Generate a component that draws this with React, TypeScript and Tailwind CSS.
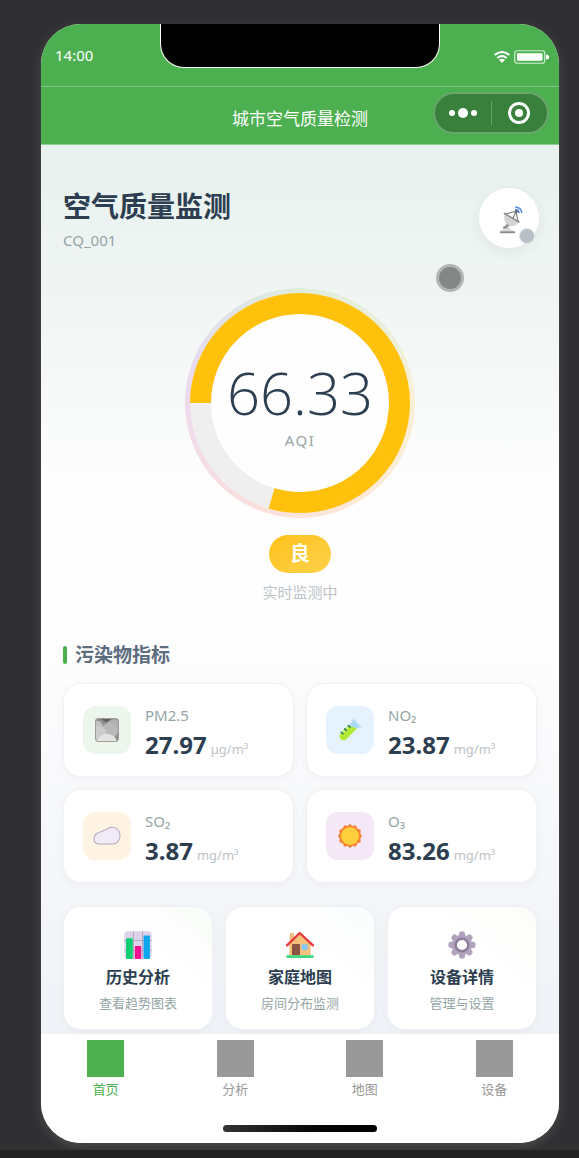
import React, { useState } from "react";
import clsx from "clsx";

interface Pollutant {
  id: string;
  name: string;
  value: string;
  unit: string;
  iconBg: string;
  icon: React.ReactNode;
}

interface Action {
  id: string;
  title: string;
  description: string;
  tint: string;
  icon: React.ReactNode;
}

const DishIcon = () => (
  <svg viewBox="0 0 68 80" className="w-6 h-7" aria-hidden="true">
    <path d="M3 73 L15 61 Q22 57 29 63 L43 73 Z" fill="#dcdcdc" />
    <rect x="2" y="72" width="44" height="6" rx="2" fill="#8e8e8e" />
    <path d="M14 62 L23 48 L31 55 L22 64 Z" fill="#9a9a9a" />
    <circle cx="15" cy="61" r="3.5" fill="#7d7d7d" />
    <path d="M15 21 L15 39 Q19 53 35 58 Q49 58 57 46 Z" fill="#d4d4d4" />
    <path d="M15 21 L57 46" stroke="#858585" strokeWidth="4" strokeLinecap="round" />
    <path d="M19 23 L48 15 L54 43 M40 35 L48 15" fill="none" stroke="#858585" strokeWidth="3.5" />
    <circle cx="49" cy="16" r="4.5" fill="#6f6f6f" />
    <path d="M46 10 Q55 10 57 20" fill="none" stroke="#4677d8" strokeWidth="4.5" />
    <path d="M46 3 Q63 4 65 20" fill="none" stroke="#5d8ae6" strokeWidth="4.5" />
  </svg>
);

const FogIcon = () => (
  <svg viewBox="0 0 72 72" className="w-6 h-6" aria-hidden="true">
    <defs>
      <clipPath id="fog-clip">
        <rect x="1" y="1" width="70" height="70" rx="9" />
      </clipPath>
    </defs>
    <g clipPath="url(#fog-clip)">
      <rect width="72" height="72" fill="#8f8f8f" />
      <path d="M12 0 H54 L34 13 Z" fill="#606060" />
      <circle cx="58" cy="26" r="22" fill="#b0b0b0" />
      <circle cx="6" cy="26" r="18" fill="#c0c0c0" />
      <circle cx="44" cy="38" r="24" fill="#b9b9b9" />
      <circle cx="10" cy="50" r="26" fill="#cbcbcb" />
      <path d="M6 72 Q12 48 36 47 Q60 48 66 72 Z" fill="#e3e3e3" />
    </g>
    <rect x="1.5" y="1.5" width="69" height="69" rx="9" fill="none" stroke="#a19c9a" strokeWidth="3" />
  </svg>
);

const TubeIcon = () => (
  <svg viewBox="0 0 72 72" className="w-6 h-6" aria-hidden="true">
    <path d="M42 12 L46 2 L71 27 L60 29 L52 36 L34 20 Z" fill="#a9d8fb" />
    <path d="M45 3 L70 27" stroke="#c3e4fd" strokeWidth="4" strokeLinecap="round" />
    <path d="M31 23 L52 29 L57 31 L27 62 Q17 71 8 63 Q0 54 9 44 Z" fill="#b2ea34" />
    <path d="M12 47 L33 26" stroke="#d3f77b" strokeWidth="4" />
    <path d="M10 43 L15 47 M20 33 L25 37 M31 23 L36 27" stroke="#26815c" strokeWidth="5" strokeLinecap="round" />
  </svg>
);

const CloudIcon = () => (
  <svg viewBox="0 0 80 56" className="w-7 h-5" aria-hidden="true">
    <path
      d="M17 51 C6 50 2 44 3 35 C4 24 13 18 23 16 C28 15 30 11 35 10 C41 10 42 6 48 4 C58 1 69 5 74 14 C80 25 77 40 68 47 C65 50 61 51 57 51 Z"
      fill="#f1ebf7"
      stroke="#baa9bd"
      strokeWidth="3"
    />
  </svg>
);

const SunIcon = () => (
  <svg viewBox="0 0 72 72" className="w-6 h-6" aria-hidden="true">
    <path
      d="M36 1 L43 7 L53 5 L57 14 L67 18 L66 28 L71 36 L66 44 L67 54 L57 58 L53 67 L43 65 L36 71 L29 65 L19 67 L15 58 L5 54 L6 44 L1 36 L6 28 L5 18 L15 14 L19 5 L29 7 Z"
      fill="#f58435"
      stroke="#f58435"
      strokeWidth="2"
      strokeLinejoin="round"
    />
    <circle cx="36" cy="36" r="27" fill="#fdcf3c" />
  </svg>
);

const ChartIcon = () => (
  <svg viewBox="0 0 80 80" className="w-7 h-7" aria-hidden="true">
    <rect x="1" y="1" width="78" height="78" rx="9" fill="#ddd3e8" />
    <path d="M27 1 V79 M53 1 V79 M1 27 H79 M1 55 H79" stroke="#b5a8c2" strokeWidth="3" />
    <rect x="6" y="21" width="19" height="59" rx="2" fill="#08cf70" />
    <rect x="31" y="43" width="18" height="37" rx="2" fill="#f50f8e" />
    <rect x="56" y="13" width="18" height="67" rx="2" fill="#0aa5ef" />
  </svg>
);

const HouseIcon = () => (
  <svg viewBox="0 0 84 80" className="w-7 h-7" aria-hidden="true">
    <rect x="11" y="4" width="13" height="30" fill="#f0c084" />
    <path d="M10 37 L41 8 L74 37 V72 H10 Z" fill="#f5bf7c" />
    <rect x="18" y="37" width="24" height="34" rx="2" fill="#8c5342" />
    <rect x="47" y="38" width="18" height="17" rx="2" fill="#86c9f7" />
    <path d="M3 41 L41 4 L81 41" fill="none" stroke="#e33b3b" strokeWidth="7" strokeLinecap="round" strokeLinejoin="round" />
    <rect x="1" y="71" width="82" height="8" rx="3" fill="#3fd982" />
  </svg>
);

const GearIcon = () => (
  <svg viewBox="0 0 80 80" className="w-7 h-7" aria-hidden="true">
    <g stroke="#b0a3bb" strokeWidth="18" strokeLinecap="round">
      <path d="M40 10 V70 M10 40 H70 M19 19 L61 61 M61 19 L19 61" />
    </g>
    <circle cx="40" cy="40" r="29" fill="#b0a3bb" />
    <circle cx="40" cy="40" r="18" fill="#ffffff" stroke="#8d7c9b" strokeWidth="7" />
  </svg>
);

const WifiIcon = () => (
  <svg viewBox="0 0 48 36" className="w-4 h-3" aria-hidden="true">
    <path d="M2 12 Q24 -6 46 12" fill="none" stroke="#fff" strokeWidth="6" />
    <path d="M10 21 Q24 9 38 21" fill="none" stroke="#fff" strokeWidth="6" />
    <path d="M24 35 L15 27 Q24 20 33 27 Z" fill="#fff" />
  </svg>
);

const BatteryIcon = () => (
  <svg viewBox="0 0 36 14" className="w-9 h-3.5" aria-hidden="true">
    <rect x="0.75" y="0.75" width="30" height="12.5" rx="2.5" fill="none" stroke="#d3edd4" strokeWidth="1.2" />
    <rect x="3" y="3.2" width="25.5" height="7.6" rx="1" fill="#fff" />
    <path d="M32 4.5 Q35.2 4.5 35.2 7 Q35.2 9.5 32 9.5 Z" fill="#fff" />
  </svg>
);

const pollutants: Pollutant[] = [
  { id: "pm25", name: "PM2.5", value: "27.97", unit: "μg/m³", iconBg: "bg-[#ecf6ed]", icon: <FogIcon /> },
  { id: "no2", name: "NO₂", value: "23.87", unit: "mg/m³", iconBg: "bg-[#e6f2fe]", icon: <TubeIcon /> },
  { id: "so2", name: "SO₂", value: "3.87", unit: "mg/m³", iconBg: "bg-[#fff3e3]", icon: <CloudIcon /> },
  { id: "o3", name: "O₃", value: "83.26", unit: "mg/m³", iconBg: "bg-[#f4e7f6]", icon: <SunIcon /> },
];

const actions: Action[] = [
  { id: "history", title: "历史分析", description: "查看趋势图表", tint: "to-[#f9fcf9]", icon: <ChartIcon /> },
  { id: "map", title: "家庭地图", description: "房间分布监测", tint: "to-[#fafcfd]", icon: <HouseIcon /> },
  { id: "device", title: "设备详情", description: "管理与设置", tint: "to-[#fdfcf9]", icon: <GearIcon /> },
];

const tabs = ["首页", "分析", "地图", "设备"];

const AqiGauge: React.FC<{ value: string; percent: number }> = ({ value, percent }) => {
  const radius = 99.5;
  const length = 2 * Math.PI * radius;

  return (
    <div className="grid place-items-center w-[230px] h-[230px] rounded-full bg-[conic-gradient(#deeedd,#f8f0d5_25%,#fdebd8_40%,#fbe0dc_55%,#f3dcea_70%,#e8daf0_80%,#dfe3e6_90%,#deeedd)]">
      <svg viewBox="0 0 220 220" className="col-start-1 row-start-1 w-[220px] h-[220px]" aria-hidden="true">
        <circle cx="110" cy="110" r="100" fill="#fefefe" />
        <circle cx="110" cy="110" r={radius} fill="none" stroke="#efefef" strokeWidth="21" />
        <circle
          cx="110"
          cy="110"
          r={radius}
          fill="none"
          stroke="#ffc10c"
          strokeWidth="21"
          strokeDasharray={`${(length * percent) / 100} ${length}`}
          transform="rotate(180 110 110)"
        />
      </svg>
      <div className="col-start-1 row-start-1 flex flex-col items-center">
        <p className="font-['Open_Sans','Noto_Sans',sans-serif] font-light text-[58px] leading-[74px] text-[#2c3e50]">{value}</p>
        <p className="text-[15px] leading-5 tracking-widest text-[#95a5a6]">AQI</p>
      </div>
    </div>
  );
};

const App: React.FC = () => {
  const [activeTab, setActiveTab] = useState("首页");

  return (
    <div className="min-h-screen flex flex-col bg-[#303032] font-['Noto_Sans','Noto_Sans_CJK_SC',sans-serif]">
      <div className="flex-1 pl-[41px] pr-5 pt-6 pb-[7px]">
        <div className="flex flex-col rounded-[40px] overflow-hidden bg-white shadow-[0_4px_12px_rgba(255,255,255,0.14)]">
          {/* Barra de estado */}
          <header className="bg-[#4caf50] text-white">
            <div className="grid grid-cols-[1fr_280px_1fr] h-[63px] border-b border-[#7cc47f]">
              <span className="self-center pl-[14px] text-[15px] leading-5">14:00</span>
              <div className="h-11 bg-black border border-t-0 border-white rounded-b-3xl" />
              <div className="flex items-center justify-end gap-1 pr-[9px] pt-1">
                <WifiIcon />
                <BatteryIcon />
              </div>
            </div>
            <div className="grid grid-cols-[1fr_auto_1fr] h-[58px] border-b border-[#8fd092]">
              <h1 className="col-start-2 pt-5 text-[17px] leading-6">城市空气质量检测</h1>
              <div className="flex items-center justify-self-end w-[116px] h-[42px] mt-[5px] mr-2.5 rounded-full border-2 border-[#6aa56d] bg-[#3a803d]">
                <button type="button" aria-label="更多" className="flex-1 flex justify-center items-center gap-[3px]">
                  <span className="w-1.5 h-1.5 rounded-full bg-white" />
                  <span className="w-2.5 h-2.5 rounded-full bg-white" />
                  <span className="w-1.5 h-1.5 rounded-full bg-white" />
                </button>
                <span className="w-px h-6 bg-[#679f69]" />
                <button type="button" aria-label="关闭" className="flex-1 flex justify-center items-center">
                  <span className="flex items-center justify-center w-[22px] h-[22px] rounded-full border-3 border-white">
                    <span className="w-2 h-2 rounded-full bg-white" />
                  </span>
                </button>
              </div>
            </div>
          </header>

          <main className="relative px-[22px] pt-[43px] pb-1 bg-[linear-gradient(180deg,#e7f1ed_0%,#f2f6f5_20%,#fefefe_40%,#fefefe_54%,#f8f9fb_72%,#eff2f7_100%)]">
            <div className="flex items-start justify-between -mr-0.5">
              <div>
                <h2 className="text-[28px] leading-9 font-bold text-[#2c3e50]">空气质量监测</h2>
                <p className="mt-1 text-[15px] leading-6 text-[#95a5a6]">CQ_001</p>
              </div>
              <button
                type="button"
                aria-label="设备状态"
                className="relative flex items-center justify-center w-15 h-15 pl-1 pt-1 rounded-full bg-white shadow-[0_4px_14px_rgba(0,0,0,0.06)]"
              >
                <DishIcon />
                <span className="absolute right-1 bottom-1 w-4 h-4 rounded-full border border-[#e3e8ea] bg-[#b7c0c4]" />
              </button>
            </div>

            <button
              type="button"
              aria-label="调试"
              className="absolute top-[119px] right-[95px] w-7 h-7 rounded-full border-3 border-[#b4b6b5] bg-[#858786]"
            />

            <section className="flex flex-col items-center mt-9">
              <AqiGauge value="66.33" percent={79.5} />
              <span className="mt-[17px] flex items-center justify-center w-[62px] h-[38px] rounded-full bg-linear-to-br from-[#fdc110] to-[#fed24a] text-xl leading-6 font-bold text-white">
                良
              </span>
              <p className="mt-[7px] text-[15px] leading-6 text-[#bdc3c7]">实时监测中</p>
            </section>

            <section className="mt-[37px]">
              <div className="flex items-center gap-2">
                <span className="w-1 h-[18px] rounded-sm bg-[#4caf50]" />
                <h3 className="text-[19px] leading-7 font-bold text-[#5d6d7e]">污染物指标</h3>
              </div>
              <ul className="grid grid-cols-2 gap-3 mt-[14px]">
                {pollutants.map((item) => (
                  <li
                    key={item.id}
                    className="flex items-center gap-[14px] h-[94px] px-[19px] rounded-[18px] border border-[#f0f1f3] bg-white shadow-[0_2px_8px_rgba(0,0,0,0.04)]"
                  >
                    <span className={clsx("flex items-center justify-center w-12 h-12 rounded-xl", item.iconBg)}>
                      {item.icon}
                    </span>
                    <div className="pt-1.5">
                      <p className="text-[15px] leading-6 text-[#95a5a6]">{item.name}</p>
                      <p className="flex items-baseline gap-1">
                        <span className="text-2xl leading-9 font-bold text-[#2c3e50]">{item.value}</span>
                        <span className="text-[13px] leading-5 text-[#bdc3c7]">{item.unit}</span>
                      </p>
                    </div>
                  </li>
                ))}
              </ul>
            </section>

            <section className="grid grid-cols-3 gap-3 mt-[23px]">
              {actions.map((action) => (
                <button
                  key={action.id}
                  type="button"
                  className={clsx(
                    "flex flex-col items-center pt-6 pb-4 rounded-[18px] border border-[#f0f1f3] bg-linear-to-tr from-white from-60% shadow-[0_2px_8px_rgba(0,0,0,0.04)]",
                    action.tint
                  )}
                >
                  {action.icon}
                  <span className="mt-1.5 text-base leading-6 font-bold text-[#2c3e50]">{action.title}</span>
                  <span className="mt-1 text-[13px] leading-5 text-[#95a5a6]">{action.description}</span>
                </button>
              ))}
            </section>
          </main>

          <footer className="flex flex-col items-center pt-1.5 pb-[11px] bg-white">
            <nav className="grid grid-cols-4 w-full">
              {tabs.map((tab) => (
                <button
                  key={tab}
                  type="button"
                  onClick={() => setActiveTab(tab)}
                  className={clsx(
                    "flex flex-col items-center text-[13px] leading-5",
                    activeTab === tab ? "text-[#4caf50]" : "text-[#999999]"
                  )}
                >
                  <span className={clsx("w-[37px] h-[37px] mb-0.5", activeTab === tab ? "bg-[#4caf50]" : "bg-[#999999]")} />
                  {tab}
                </button>
              ))}
            </nav>
            <span className="mt-[26px] w-[154px] h-[7px] rounded-full bg-linear-to-r from-[#333333] to-black" />
          </footer>
        </div>
      </div>
      <div className="h-2 bg-[#232323]" />
    </div>
  );
};

export default App;
